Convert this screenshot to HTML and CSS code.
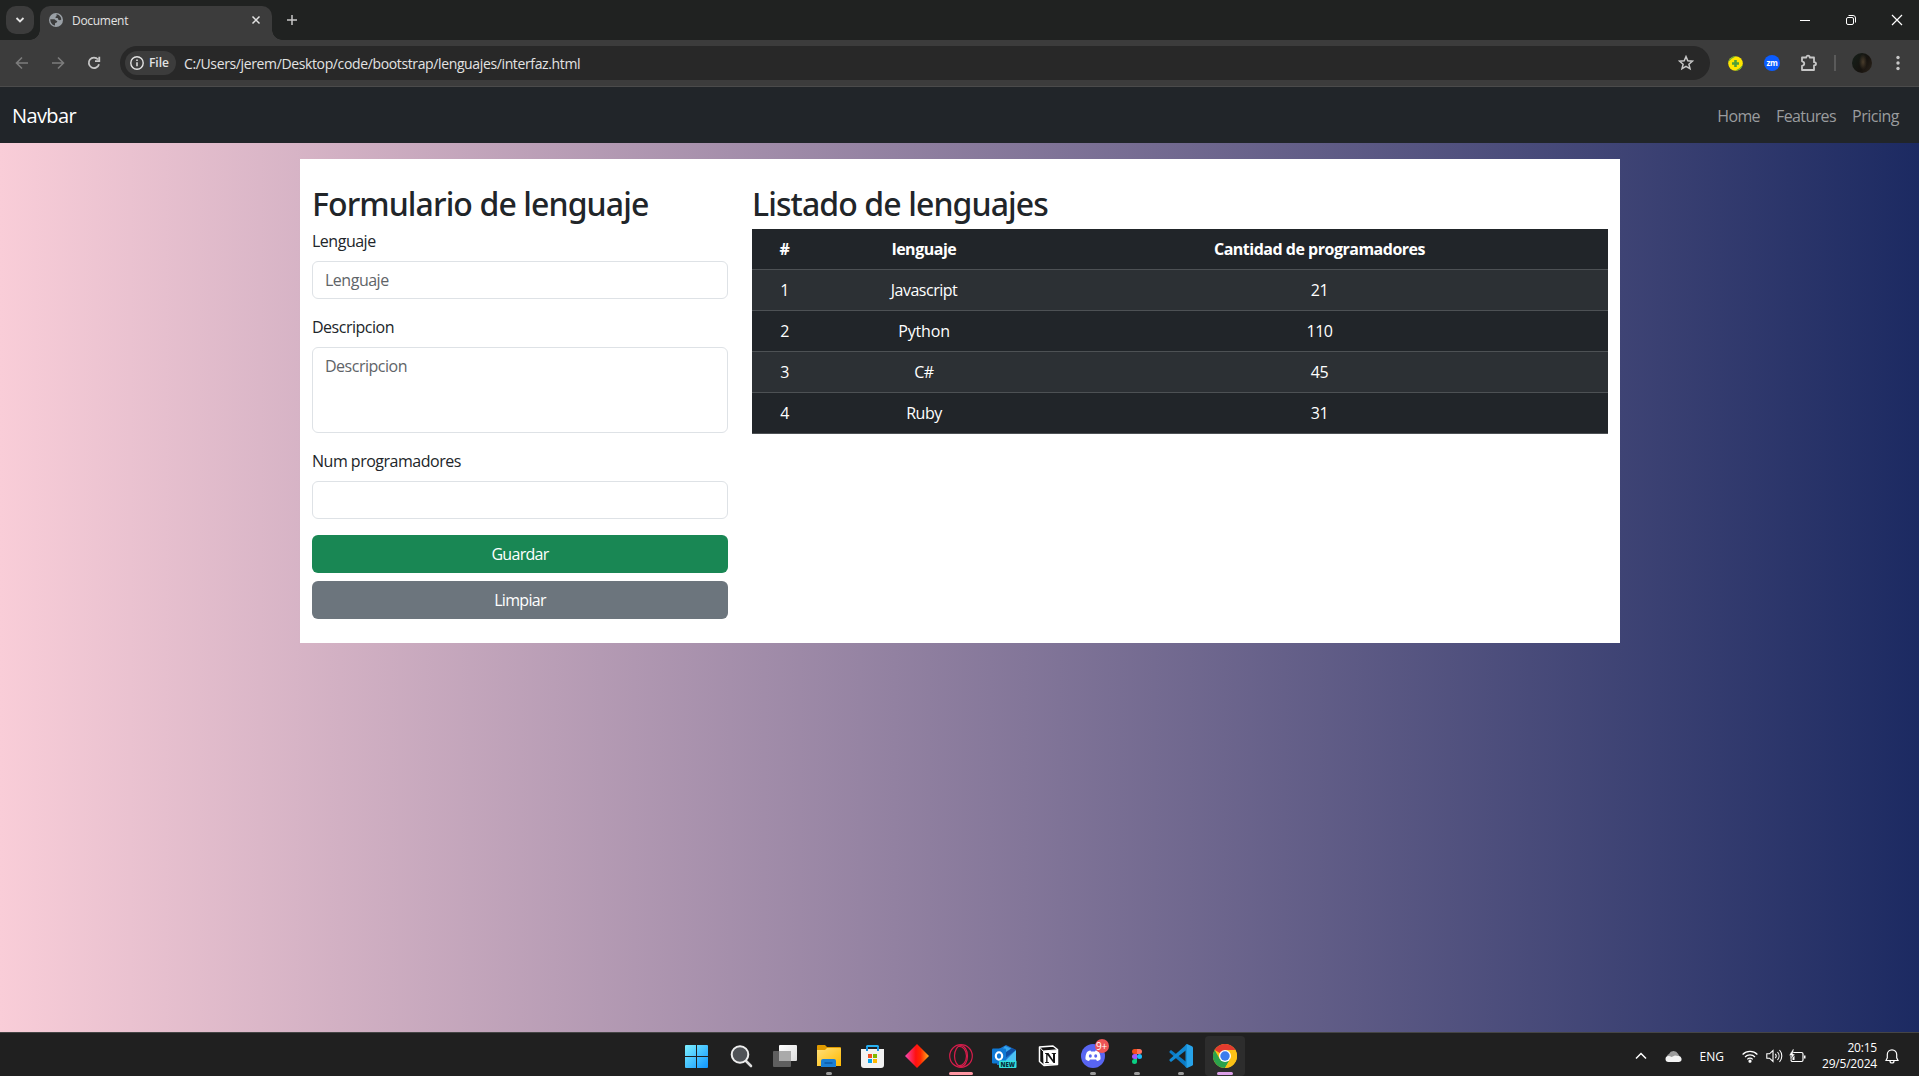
FILE: index.html
```html
<!DOCTYPE html>
<html lang="es">
<head>
<meta charset="utf-8">
<title>Document</title>
<link rel="stylesheet" href="styles.css">
</head>
<body>
<header class="tabstrip">
  <button class="tab-search"><svg width="10" height="10" viewBox="0 0 10 10"><path d="M1.5 3l3.5 3.5L8.500 3" fill="none" stroke="#e3e3e3" stroke-width="1.8"/></svg></button>
  <div class="tab">
    <svg width="14" height="14" viewBox="0 0 14 14"><circle cx="7" cy="7" r="7" fill="#9aa0a6"/><path d="M7.500 1.200c2.500.2 4.800 2.500 4.800 5.300-1 .8-2 .9-2.900.2-.6-.6-.2-1.300-1-1.600-.9-.3-1.900.1-2-.8 0-.7 1-.7 1.300-1.300.2-.5-.5-1.100-.2-1.800zM1.300 6.200l3.800.1c1.300.2 1.400 1.300 2.400 1.500 1 .2.900 1.300.1 1.700-.9.400-1.600.5-1.600 1.400v1.600C3.100 12 1.200 9.300 1.300 6.200z" fill="#3c3c3c"/></svg>
    <span class="tab-title">Document</span>
    <svg width="10" height="10" viewBox="0 0 10 10"><path d="M1.500 1.500l7 7m0-7l-7 7" stroke="#e3e3e3" stroke-width="1.500"/></svg>
  </div>
  <button class="new-tab"><svg width="12" height="12" viewBox="0 0 12 12"><path d="M6 1v10M1 6h10" stroke="#c7c7c7" stroke-width="1.500"/></svg></button>
  <div class="window-controls">
    <svg width="12" height="12" viewBox="0 0 12 12"><path d="M1 6.500h10" stroke="#fff"/></svg>
    <svg width="12" height="12" viewBox="0 0 12 12" fill="none" stroke="#fff"><rect x="1.500" y="3.500" width="7" height="7" rx="1.500"/><path d="M3.500 1.500H8A2.500 2.500 0 0 1 10.500 4v4.500"/></svg>
    <svg width="12" height="12" viewBox="0 0 12 12"><path d="M1 1l10 10M11 1L1 11" stroke="#fff" stroke-width="1.200"/></svg>
  </div>
</header>
<div class="toolbar">
  <div class="nav-buttons">
    <svg width="14" height="14" viewBox="0 0 14 14" fill="none" stroke="#7c7c7c" stroke-width="1.600"><path d="M13 7H2M7 1.500L1.500 7 7 12.500"/></svg>
    <svg width="14" height="14" viewBox="0 0 14 14" fill="none" stroke="#7c7c7c" stroke-width="1.600"><path d="M1 7h11M7 1.500L12.500 7 7 12.500"/></svg>
    <svg width="14" height="14" viewBox="0 0 14 14" fill="none" stroke="#c7c7c7" stroke-width="1.800"><path d="M12 8.200A5.200 5.200 0 1 1 11 3.500M12.300.8v4.400H8"/></svg>
  </div>
  <div class="omnibox">
    <span class="chip"><svg width="14" height="14" viewBox="0 0 14 14" fill="none" stroke="#e3e3e3"><circle cx="7" cy="7" r="6.200" stroke-width="1.400"/><path d="M7 6.200v4M7 3.500V5" stroke-width="1.500"/></svg>File</span>
    <span class="url">C:/Users/jerem/Desktop/code/bootstrap/lenguajes/interfaz.html</span>
    <svg class="star" width="16" height="16" viewBox="0 0 16 16"><path d="M8 1.600l1.800 4.200 4.600.4-3.500 3 1.100 4.500L8 11.300l-4 2.400 1.100-4.500-3.500-3 4.600-.4z" fill="none" stroke="#c7c7c7" stroke-width="1.500"/></svg>
  </div>
  <svg class="ext-yellow" width="15" height="15" viewBox="0 0 15 15"><circle cx="7.500" cy="7.500" r="7.300" fill="#ffe600"/><path d="M.3 6A7.300 7.300 0 0 1 8 .2L3.500 2.700zM14.700 9a7.300 7.300 0 0 1-7.700 5.800l4.500-2.500z" fill="#56a83a"/><path d="M7.500 4v7M4 7.500h7" stroke="#4fa03a" stroke-width="2.600"/></svg>
  <span class="ext-zm">zm</span>
  <svg class="puzzle" width="18" height="18" viewBox="0 0 18 18"><path d="M2 3.500h4.300C6.300 1 9.700 1 9.700 3.500H14v4.700c2.700 0 2.700 3.200 0 3.200V16H2v-4c3-.6 3-4.200 0-4.700z" fill="none" stroke="#c7c7c7" stroke-width="1.800" stroke-linejoin="round"/></svg>
  <span class="divider"></span>
  <span class="avatar"></span>
  <svg class="dots" width="4" height="16" viewBox="0 0 4 16" fill="#c7c7c7"><circle cx="2" cy="2.500" r="1.700"/><circle cx="2" cy="8" r="1.700"/><circle cx="2" cy="13.500" r="1.700"/></svg>
</div>

<main class="page">
  <nav class="navbar">
    <a class="brand">Navbar</a>
    <div class="links"><a class="home">Home</a><a class="features">Features</a><a>Pricing</a></div>
  </nav>
  <section class="panel">
    <form class="form">
      <h2>Formulario de lenguaje</h2>
      <label for="lang">Lenguaje</label>
      <input id="lang" type="text" placeholder="Lenguaje">
      <label for="desc">Descripcion</label>
      <textarea id="desc" placeholder="Descripcion"></textarea>
      <label for="num">Num programadores</label>
      <input id="num" type="text">
      <button type="button" class="btn save">Guardar</button>
      <button type="button" class="btn clear">Limpiar</button>
    </form>
    <div class="list">
      <h2>Listado de lenguajes</h2>
      <table>
        <colgroup><col class="c-id"><col class="c-name"><col></colgroup>
        <thead><tr><th>#</th><th>lenguaje</th><th>Cantidad de programadores</th></tr></thead>
        <tbody>
          <tr><td>1</td><td>Javascript</td><td>21</td></tr>
          <tr><td>2</td><td class="loose">Python</td><td>110</td></tr>
          <tr><td>3</td><td>C#</td><td>45</td></tr>
          <tr><td>4</td><td>Ruby</td><td>31</td></tr>
        </tbody>
      </table>
    </div>
  </section>
</main>

<footer class="taskbar">
  <div class="apps">
    <span class="app"><svg width="23" height="23" viewBox="0 0 23 23"><defs><linearGradient id="win" gradientUnits="userSpaceOnUse" x1="0" y1="0" x2="23" y2="23"><stop offset="0" stop-color="#7df0ff"/><stop offset="1" stop-color="#0f95ff"/></linearGradient></defs><path fill="url(#win)" d="M0 1a1 1 0 0 1 1-1h10v11H0zM12 0h10a1 1 0 0 1 1 1v10H12zM0 12h11v11H1a1 1 0 0 1-1-1zM12 12h11v10a1 1 0 0 1-1 1H12z"/></svg></span>
    <span class="app"><svg width="24" height="24" viewBox="0 0 24 24"><path d="M17 17l5 5" stroke="#ddd" stroke-width="2.600" stroke-linecap="round"/><circle cx="11" cy="10.500" r="8.300" fill="#505357" stroke="#eee" stroke-width="2"/></svg></span>
    <span class="app"><svg width="24" height="24" viewBox="0 0 24 24"><defs><linearGradient id="tv" x1="0" y1="0" x2="1" y2="1"><stop offset="0" stop-color="#fff"/><stop offset="1" stop-color="#ddd"/></linearGradient></defs><rect x="6" y="1" width="18" height="16" rx="1" fill="url(#tv)"/><rect y="7" width="18" height="16" rx="1" fill="#666" fill-opacity=".9"/><rect x="6" y="7" width="12" height="10" fill="#aaa"/></svg></span>
    <span class="app running"><svg width="24" height="22" viewBox="0 0 24 22"><defs><linearGradient id="fd" x1="0" y1="0" x2="1" y2="1"><stop offset="0" stop-color="#ffe07a"/><stop offset="1" stop-color="#ffb900"/></linearGradient></defs><path d="M0 1a1 1 0 0 1 1-1h7l2 2h13a1 1 0 0 1 1 1v6H0z" fill="#e09b00"/><path d="M0 5h8l2-2h13a1 1 0 0 1 1 1v17H0z" fill="url(#fd)"/><path d="M4 22v-6a2 2 0 0 1 2-2h11a2 2 0 0 1 2 2v6z" fill="#1a7fd4"/><path d="M7.500 18h8" stroke="#0c59a4" stroke-width="1.500"/></svg></span>
    <span class="app"><svg width="23" height="23" viewBox="0 0 23 23"><path d="M6 7V1.500Q6 1 6.500 1h10q.5 0 .5.500V7" fill="none" stroke="#28b1f1" stroke-width="2"/><path d="M0 4h23v16a3 3 0 0 1-3 3H3a3 3 0 0 1-3-3z" fill="#f2f2f2"/><path d="M6 2v4M17 2v4" stroke="#1591e0" stroke-width="2"/><path fill="#f25022" d="M7 9h4v4H7z"/><path fill="#7fba00" d="M12 9h4v4h-4z"/><path fill="#00a4ef" d="M7 14h4v4H7z"/><path fill="#ffb900" d="M12 14h4v4h-4z"/></svg></span>
    <span class="app"><svg width="24" height="24" viewBox="0 0 24 24"><defs><linearGradient id="dm"><stop offset="0" stop-color="#f548b5"/><stop offset=".45" stop-color="#ff1010"/><stop offset=".65" stop-color="#ff2a00"/><stop offset="1" stop-color="#ffb020"/></linearGradient></defs><path d="M12 0l12 12-12 12L0 12z" fill="url(#dm)"/></svg></span>
    <span class="app running pink"><svg width="24" height="24" viewBox="0 0 24 24" fill="none" stroke="#d51d4b" stroke-width="1.200"><circle cx="12" cy="12" r="11.300"/><ellipse cx="12" cy="12" rx="6.500" ry="10.500"/><path d="M9 2.500c5-1 8.500 4 8.500 9.500S14 22.500 9 21.500"/></svg></span>
    <span class="app"><svg width="25" height="23" viewBox="0 0 25 23"><path d="M5 5l9-5 10 5v15H5z" fill="#1c74cf"/><path d="M13 1l7 3-9 9-5-3z" fill="#36a7ed"/><path d="M24 5v15H9z" fill="#4bc1f5"/><path d="M24 5L12 14l-4-3 12-8z" fill="#0f4fa3"/><rect y="3.500" width="14" height="15" rx="1.200" fill="#0f78d4"/><ellipse cx="7" cy="11" rx="3.200" ry="3.700" fill="none" stroke="#fff" stroke-width="2.100"/><rect x="7" y="15.500" width="17.500" height="7.500" rx="1" fill="#33e0dd"/><text x="8.500" y="21.700" class="new-badge">NEW</text></svg></span>
    <span class="app"><svg width="21" height="22" viewBox="0 0 21 22"><path d="M1.500 2L15 1l4.500 3.500v15L6 20.500l-4.500-4z" fill="#111" stroke="#fff" stroke-width="1.500" stroke-linejoin="round"/><path d="M5 6l14-1v14L5.500 20z" fill="#fff"/><path d="M2 2.500L5 6l14-1.200" fill="none" stroke="#fff"/><rect x="6" y="6.800" width="12" height="12" fill="#fff"/><path d="M7 8h3.500l4.500 6.800V9l-1.300-.3V8H18v.7l-1 .3v9h-1.500L9.500 10v7l1.500.3v.7H7v-.7l1.200-.3V9L7 8.700z" fill="#111"/></svg></span>
    <span class="app running"><svg width="24" height="24" viewBox="0 0 24 24"><circle cx="12" cy="12" r="12" fill="#5865f2"/><path d="M8 6.700l1.500-.3.500 1h4l.5-1 1.500.3 2 1.200c1.200 2.300 1.700 4.800 1.500 7.300-1 .9-2.200 1.500-3.500 1.900l-1-1.700H9l-1 1.700c-1.300-.4-2.500-1-3.500-1.900-.2-2.500.3-5 1.500-7.300z" fill="#fff"/><ellipse cx="9.300" cy="12" rx="1.500" ry="1.700" fill="#5865f2"/><ellipse cx="14.700" cy="12" rx="1.500" ry="1.700" fill="#5865f2"/></svg><b class="badge">9+</b></span>
    <span class="app running"><svg width="10" height="15" viewBox="0 0 10 15"><path d="M2.500 0H5v5H2.500a2.500 2.500 0 0 1 0-5z" fill="#f24e1e"/><path d="M5 0h2.500a2.500 2.500 0 0 1 0 5H5z" fill="#ff7262"/><path d="M2.500 5H5v5H2.500a2.500 2.500 0 0 1 0-5z" fill="#a259ff"/><circle cx="7.500" cy="7.500" r="2.500" fill="#1abcfe"/><path d="M2.500 10H5v2.500A2.500 2.500 0 1 1 2.500 10z" fill="#0acf83"/></svg></span>
    <span class="app running"><svg width="24" height="24" viewBox="0 0 24 24"><path d="M2 6l16 12.500V24L.5 8.500V7.200z" fill="#0a79c4"/><path d="M2 18L18 5.500V0L.5 15.500v1.300z" fill="#1289d3"/><path d="M18 0l5 2.200q1 .5 1 1.500v16.600q0 1-1 1.500L18 24z" fill="#27a3ea"/><path d="M18 0v24l-1.500-1V1z" fill="#168fd8"/></svg></span>
    <span class="app running active"><svg width="24" height="24" viewBox="0 0 24 24"><circle cx="12" cy="12" r="12" fill="#fbc116"/><path d="M12 12L1.600 6A12 12 0 0 1 22.400 6z" fill="#e33b2e"/><path d="M1.600 6A12 12 0 0 0 12 24l5.200-9L12 12 6.800 15z" fill="#2ba24c"/><path d="M12 6h10.400A12 12 0 0 1 12 24l5.200-9z" fill="#fbc116"/><circle cx="12" cy="12" r="6" fill="#fff"/><circle cx="12" cy="12" r="4.700" fill="#3b7ded"/></svg></span>
  </div>
  <div class="tray">
    <svg class="chevron" width="12" height="8" viewBox="0 0 12 8"><path d="M1 6.500l5-5 5 5" fill="none" stroke="#fff" stroke-width="1.500"/></svg>
    <svg class="cloud" width="17" height="11" viewBox="0 0 17 11"><path d="M2 6a3 3 0 0 1 2-3 5 5 0 0 1 9-.200L15 6z" fill="#9b9b9b"/><path d="M3.500 11a3 3 0 0 1 0-6c1 0 2 .3 3 1l3.500-1.500 3 .5a3 3 0 0 1 1 6z" fill="#f3f3f3"/></svg>
    <span class="lang">ENG</span>
    <svg class="wifi" width="16" height="13" viewBox="0 0 16 13" fill="none" stroke="#fff" stroke-width="1.200"><path d="M.6 4.500a10.500 10.500 0 0 1 14.800 0M3 7a7 7 0 0 1 10 0M5.300 9.300a3.800 3.800 0 0 1 5.400 0"/><circle cx="8" cy="11.200" r="1" fill="#fff"/></svg>
    <svg class="sound" width="17" height="14" viewBox="0 0 17 14" fill="none" stroke="#fff" stroke-width="1.100"><path d="M.8 4.800H3.500L7 1.500v11L3.500 9.200H.8zM9.300 4.800a3.500 3.500 0 0 1 0 4.400M11.500 3a6 6 0 0 1 0 8M13.500 1a9 9 0 0 1 0 12"/></svg>
    <svg class="battery" width="17" height="14" viewBox="0 0 17 14"><rect x="2" y="3.500" width="12" height="9" rx="1.500" fill="none" stroke="#fff" stroke-width="1.200"/><path d="M15 6.500h1.500v3H15z" fill="#fff"/><path d="M4 0L0 6.500h2.500L1.500 11 6 5H3.800L5 0z" fill="#fff" stroke="#202020" stroke-width=".4"/><path d="M3.500 11V9l2-2.500V11z" fill="#fff"/></svg>
    <div class="clock"><span class="time">20:15</span><span>29/5/2024</span></div>
    <svg class="bell" width="14" height="15" viewBox="0 0 14 15" fill="none" stroke="#fff" stroke-width="1.200"><path d="M1 11.500l1.300-2.700V5.500a4.700 4.700 0 0 1 9.400 0v3.300L13 11.500zM5 12a2 2 0 0 0 4 0"/></svg>
  </div>
</footer>
</body>
</html>
```
FILE: styles.css
```css
* { box-sizing: border-box; }
body {
  margin: 0;
  height: 1076px;
  display: flex;
  flex-direction: column;
  overflow: hidden;
  font: 400 16px/1.5 "Open Sans", "Noto Sans", sans-serif;
  letter-spacing: -0.49px;
  color: #212529;
}
svg { display: block; flex: none; }
button { border: 0; padding: 0; font: inherit; letter-spacing: inherit; }

.tabstrip { height: 40px; flex: none; display: flex; align-items: center; background: #202221; padding-left: 6px; }
.tab-search { width: 28px; height: 28px; border-radius: 10px; background: #3c3c3c; display: grid; place-items: center; }
.tab {
  position: relative;
  width: 232px; height: 34px; margin-left: 6px; padding: 0 11px 6px 9px;
  align-self: flex-end; display: flex; align-items: center;
  background: #3c3c3c; border-radius: 10px 10px 0 0;
}
.tab::before, .tab::after { content: ""; position: absolute; bottom: 0; width: 10px; height: 10px; }
.tab::before { left: -10px; background: radial-gradient(circle at 0 0, transparent 9.500px, #3c3c3c 10px); }
.tab::after { right: -10px; background: radial-gradient(circle at 100% 0, transparent 9.500px, #3c3c3c 10px); }
.tab-title { flex: 1; margin-left: 9px; padding-top: 2px; font-size: 12px; letter-spacing: -0.3px; color: #e3e3e3; }
.new-tab { background: none; margin-left: 14px; }
.window-controls { margin-left: auto; display: flex; gap: 34px; padding-right: 16px; }

.toolbar {
  height: 47px; flex: none; display: flex; align-items: center;
  background: #3c3c3c; border-bottom: 1px solid #4b4b4b; padding-left: 15px;
}
.nav-buttons { display: flex; gap: 22px; width: 105px; }
.omnibox { width: 1590px; height: 34px; border-radius: 17px; background: #282828; display: flex; align-items: center; padding: 0 16px 0 5px; }
.chip {
  display: flex; align-items: center; gap: 5px; width: 51px; height: 24px; padding-left: 5px;
  border-radius: 12px; background: #3c3c3c; color: #e3e3e3; font-size: 12px; font-weight: 600; letter-spacing: -0.05px;
}
.url { margin-left: 8px; color: #e3e3e3; font-size: 14px; letter-spacing: -0.37px; }
.star { margin-left: auto; }
.ext-yellow { margin-left: 18px; }
.ext-zm {
  width: 16px; height: 16px; margin-left: 21px; border-radius: 50%; background: #0b5cff; color: #fff;
  font: 700 8px/15px "Open Sans", sans-serif; letter-spacing: -0.3px; text-align: center;
}
.puzzle { margin-left: 20px; }
.divider { width: 2px; height: 16px; margin-left: 16px; background: #5a5a5a; }
.avatar {
  width: 20px; height: 20px; margin-left: 16px; border-radius: 50%;
  background: radial-gradient(ellipse 4px 8px at 55% 45%, #4a3d2c, transparent), linear-gradient(120deg, #15201a, #17130f 60%, #2d251c);
}
.dots { margin-left: 24px; }

.page { flex: 1; background: linear-gradient(90deg, #f9cdd8, #1c2a62); }
.navbar { height: 56px; background: #212529; display: flex; align-items: center; justify-content: space-between; padding: 1px 20px 0 12px; }
.brand { color: #fff; font-size: 20px; letter-spacing: -0.6px; }
.links { display: flex; gap: 16px; color: #9a9c9e; }
.home, .features { letter-spacing: -0.6px; }

.panel { width: 1320px; height: 484px; margin: 16px 0 0 300px; padding: 24px 12px; background: #fff; display: grid; grid-template-columns: 416px 1fr; gap: 24px; }
h2 { margin: 0 0 6px; padding-top: 2px; font: 500 32px/38.400px "Noto Sans", "Open Sans", sans-serif; letter-spacing: -0.9px; }
.form { display: flex; flex-direction: column; }
label { margin-bottom: 8px; }
input, textarea {
  width: 100%; height: 38px; margin: 0 0 16px; padding: 6px 12px; border: 1px solid #dee2e6; border-radius: 6px;
  background: #fff; font: inherit; letter-spacing: inherit; resize: none; flex: none;
}
textarea { height: 86px; }
::placeholder { color: #5f6468; opacity: 1; }
.btn { height: 38px; border-radius: 6px; color: #fff; letter-spacing: -0.7px; }
.save { background: #198754; margin-bottom: 8px; }
.clear { background: #6c757d; }

table { width: 100%; table-layout: fixed; border-collapse: separate; border-spacing: 0; color: #fff; text-align: center; background: #212529; }
.c-id { width: 65px; }
.c-name { width: 214px; }
th, td { height: 41px; padding: 8px; border-bottom: 1px solid #4d5154; }
tbody tr:nth-child(odd) { background: #2c3034; }
.loose { letter-spacing: -0.16px; }

.taskbar { height: 44px; flex: none; display: grid; grid-template-columns: 674.500px 572px 1fr; background: #202020; border-top: 1px solid #454545; color: #fff; font-size: 12px; }
.apps { grid-column: 2; display: grid; grid-template-columns: repeat(13, 44px); }
.app { position: relative; display: grid; place-items: center; margin: 3px 2px 0; border-radius: 4px; }
.active { background: #2d2d2d; }
.running::after { content: ""; position: absolute; left: 17px; bottom: 1px; width: 6px; height: 3px; border-radius: 2px; background: #9a9a9a; }
.pink::after { left: 8px; width: 24px; background: #ff98a4; }
.active::after { left: 12px; width: 16px; background: #dca0e8; }
.badge { position: absolute; left: 22px; top: 3px; width: 14px; height: 14px; border-radius: 50%; background: #ee5555; font: 400 10px/14px "Open Sans", sans-serif; letter-spacing: -0.3px; text-align: center; }
.new-badge { font: 800 6px "Open Sans", sans-serif; letter-spacing: 0; fill: #062f3a; }
.tray { grid-column: 3; display: flex; justify-content: flex-end; align-items: center; padding: 3px 20px 0 0; }
.cloud { margin-left: 18px; }
.lang { margin-left: 18px; letter-spacing: 0; margin-top: 2px; }
.wifi { margin-left: 18px; }
.sound { margin-left: 8px; }
.battery { margin-left: 6px; }
.clock { display: flex; flex-direction: column; align-items: flex-end; line-height: 16px; margin-left: 16px; letter-spacing: -0.2px; }
.bell { margin-left: 8px; }
```
